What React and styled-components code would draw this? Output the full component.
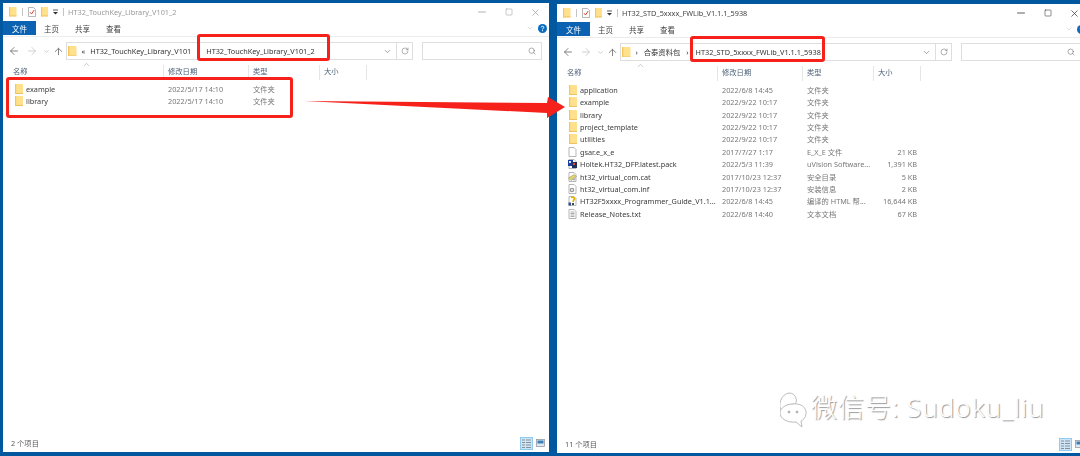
import React from "react";
import styled, { createGlobalStyle } from "styled-components";
import { ArrowLeft, ArrowRight, ArrowUp, ChevronDown, ChevronUp, Minus, RotateCw, Search, Square, X } from "lucide-react";

const LEFT_ROWS = [
  { icon: "folder", name: "example", date: "2022/5/17 14:10", type: "文件夹" },
  { icon: "folder", name: "library", date: "2022/5/17 14:10", type: "文件夹" },
];

const RIGHT_ROWS = [
  { icon: "folder", name: "application", date: "2022/6/8 14:45", type: "文件夹" },
  { icon: "folder", name: "example", date: "2022/9/22 10:17", type: "文件夹" },
  { icon: "folder", name: "library", date: "2022/9/22 10:17", type: "文件夹" },
  { icon: "folder", name: "project_template", date: "2022/9/22 10:17", type: "文件夹" },
  { icon: "folder", name: "utilities", date: "2022/9/22 10:17", type: "文件夹" },
  { icon: "blank", name: "gsar.e_x_e", date: "2017/7/27 1:17", type: "E_X_E 文件", size: "21 KB" },
  { icon: "pack", name: "Holtek.HT32_DFP.latest.pack", date: "2022/5/3 11:39", type: "uVision Software...", size: "1,391 KB" },
  { icon: "cat", name: "ht32_virtual_com.cat", date: "2017/10/23 12:37", type: "安全目录", size: "5 KB" },
  { icon: "inf", name: "ht32_virtual_com.inf", date: "2017/10/23 12:37", type: "安装信息", size: "2 KB" },
  { icon: "chm", name: "HT32F5xxxx_Programmer_Guide_V1.1...", date: "2022/6/8 14:45", type: "编译的 HTML 帮...", size: "16,644 KB" },
  { icon: "txt", name: "Release_Notes.txt", date: "2022/6/8 14:40", type: "文本文档", size: "67 KB" },
];

const GlobalStyle = createGlobalStyle`
  html, body { margin: 0; padding: 0; background: #02589e; }
  body { font-family: "Noto Sans", "Noto Sans CJK SC", sans-serif; }
`;

const Page = styled.div`
  position: relative;
  display: grid;
  grid-template-columns: 546px 531px;
  gap: 8px;
  width: 1080px;
  height: 456px;
  padding: 3px 0 4px 3px;
  box-sizing: border-box;
  overflow: hidden;
  background: #02589e;
`;

const Win = styled.section`
  display: flex;
  flex-direction: column;
  margin-top: ${(p) => p.$drop}px;
  margin-bottom: ${(p) => (p.$drop ? -1 : 0)}px;
  min-height: 0;
  background: #fff;
  font-size: 7.3px;
  color: #3a3a3a;
  filter: blur(0.35px);
`;

const TitleBar = styled.header`
  display: flex;
  align-items: center;
  height: 18px;
  padding: 0 0 0 6px;
`;

const Quick = styled.div`
  display: flex;
  align-items: center;
  gap: 5px;
  margin-right: 3px;
  color: #333;
`;

const Sep = styled.span`
  width: 1px;
  height: 8px;
  background: #c4c4c4;
`;

const Title = styled.span`
  flex: 1;
  margin-left: 1px;
  color: ${(p) => (p.$dim ? "#999" : "#444")};
`;

const WinButtons = styled.div`
  display: flex;
  color: ${(p) => (p.$dim ? "#9a9a9a" : "#2a2a2a")};
`;

const WinButton = styled.span`
  display: flex;
  align-items: center;
  justify-content: center;
  width: 27px;
  height: 18px;
`;

const Ribbon = styled.nav`
  display: flex;
  align-items: center;
  height: 14px;
  padding-bottom: 1px;
  border-bottom: 1px solid #ececec;
`;

const FileTab = styled.span`
  display: flex;
  align-items: center;
  justify-content: center;
  width: 33px;
  height: 14px;
  font-size: 7.5px;
  color: #fff;
  background: #0b62b2;
`;

const Tab = styled.span`
  width: 31px;
  text-align: center;
  font-size: 7.5px;
  color: #444;
`;

const RibbonEnd = styled.div`
  display: flex;
  align-items: center;
  gap: 4px;
  margin-left: auto;
  padding-right: 2px;
  color: #aaa;
`;

const NavBar = styled.div`
  display: flex;
  align-items: center;
  height: 28px;
  padding: 0 7px 0 5px;
  box-sizing: border-box;
`;

const NavButtons = styled.div`
  display: flex;
  align-items: center;
  width: 58px;
  color: #777;
`;

const NavIcon = styled.span`
  display: flex;
  margin-left: ${(p) => p.$ml || 0}px;
  color: ${(p) => p.$color || "#777"};
`;

const AddressBox = styled.div`
  display: flex;
  align-items: center;
  flex: 1;
  height: 18px;
  margin-right: 9px;
  border: 1px solid #dedede;
  box-sizing: border-box;
  padding-left: 1px;
`;

const Crumb = styled.span`
  margin-left: ${(p) => p.$gap}px;
  color: #333;
  white-space: nowrap;
`;

const AddressEnd = styled.div`
  display: flex;
  align-items: center;
  height: 100%;
  margin-left: auto;
  color: #666;
`;

const AddressCell = styled.span`
  display: flex;
  align-items: center;
  justify-content: center;
  width: ${(p) => (p.$line ? 16 : 18)}px;
  height: 100%;
  box-sizing: border-box;
  border-left: ${(p) => (p.$line ? "1px solid #dedede" : "none")};
`;

const SearchBox = styled.div`
  display: flex;
  align-items: center;
  justify-content: flex-end;
  width: 120px;
  height: 18px;
  padding-right: 5px;
  border: 1px solid #dedede;
  box-sizing: border-box;
  color: #666;
`;

const Columns = styled.div`
  display: grid;
  grid-template-columns: 161px 85px 71px 47px;
  align-items: center;
`;

const HeaderRow = styled(Columns)`
  position: relative;
  height: 15px;
  color: #4d6178;
`;

const SortCaret = styled.span`
  position: absolute;
  left: 79px;
  top: -5px;
  display: flex;
  color: #888;
`;

const HeadCell = styled.span`
  height: 100%;
  display: flex;
  align-items: center;
  padding: 0 0 3px ${(p) => (p.$first ? 10 : 4)}px;
  border-right: 1px solid #e6e6e6;
  box-sizing: border-box;
`;

const List = styled.div`
  flex: 1;
  padding-top: 2.5px;
`;

const Row = styled(Columns)`
  height: 12.42px;
  white-space: nowrap;
`;

const NameCell = styled.span`
  display: flex;
  align-items: center;
  gap: 3px;
  padding-left: 11px;
  color: #3c3c3c;
`;

const IconSlot = styled.span`
  display: flex;
  justify-content: center;
  flex: 0 0 9px;
`;

const InfoCell = styled.span`
  padding-left: 4px;
  color: #777;
`;

const SizeCell = styled.span`
  padding-right: 4px;
  text-align: right;
  color: #777;
`;

const StatusBar = styled.footer`
  display: flex;
  align-items: center;
  justify-content: space-between;
  height: 18px;
  padding: 0 4px 0 8px;
  color: #5a5a5a;
`;

const ViewButtons = styled.div`
  display: flex;
  align-items: center;
  gap: 3px;
`;

const ViewActive = styled.span`
  display: flex;
  align-items: center;
  justify-content: center;
  width: 13px;
  height: 13px;
  background: #cde6f7;
  border: 1px solid #8fcbf0;
  box-sizing: border-box;
`;

const Callout = styled.div`
  position: absolute;
  left: ${(p) => p.$x}px;
  top: ${(p) => p.$y}px;
  width: ${(p) => p.$w}px;
  height: ${(p) => p.$h}px;
  border: 3px solid #f5211a;
  border-radius: 3px;
  box-sizing: border-box;
`;

const ArrowLayer = styled.svg`
  position: absolute;
  left: 0;
  top: 0;
  pointer-events: none;
`;

const Watermark = styled.div`
  position: absolute;
  left: 780px;
  top: 387px;
  display: flex;
  align-items: center;
  gap: 4px;
  font-weight: 300;
  font-size: 26px;
  letter-spacing: 1px;
  color: #fff;
  text-shadow: 1px 1px 1px rgba(0, 0, 0, 0.42);
  white-space: nowrap;
`;

const WatermarkMark = styled.span`
  display: flex;
  margin-top: 4px;
`;

const WatermarkText = styled.span`
  margin-bottom: 4px;
`;

const Folder = ({ size = 8 }) => (
  <svg width={size} height={size * 1.25} viewBox="0 0 8 10">
    <rect x="0" y="0" width="8" height="10" rx="0.6" fill="#ffe08c" />
    <rect x="0" y="0" width="1.2" height="10" fill="#f2c661" />
    <rect x="0" y="9" width="8" height="1" fill="#eec262" />
  </svg>
);

const FileIcon = ({ kind }) => {
  if (kind === "folder") return <Folder />;
  return (
    <svg width="9" height="10" viewBox="0 0 9 10">
      <path d="M1 0.5H6L8 2.5V9.5H1Z" fill="#fff" stroke="#9a9a9a" strokeWidth="0.7" />
      {kind === "txt" && (
        <path d="M2.5 3H6.5M2.5 4.5H6.5M2.5 6H6.5M2.5 7.5H6.5" stroke="#8a8a8a" strokeWidth="0.7" />
      )}
      {kind === "pack" && (
        <>
          <rect x="0" y="1" width="5" height="6" fill="#1f3f9e" />
          <rect x="4" y="3" width="5" height="6" fill="#22305e" />
          <rect x="5" y="4" width="2" height="2" fill="#e04a3a" />
          <rect x="1" y="2" width="2" height="2" fill="#d8e4ff" />
        </>
      )}
      {kind === "cat" && (
        <>
          <path d="M0.5 6L6 2.5L8.5 4.5L3 8.5Z" fill="#e2d56a" stroke="#8d8d6a" strokeWidth="0.5" />
          <circle cx="6" cy="7" r="1.6" fill="#b8b8b8" />
        </>
      )}
      {kind === "inf" && (
        <>
          <circle cx="4" cy="6" r="2.3" fill="#9c9c9c" />
          <circle cx="4" cy="6" r="0.9" fill="#fff" />
        </>
      )}
      {kind === "chm" && (
        <>
          <path d="M3 1.6C6.5 0.5 7.5 3 5.5 4.2L5 6" fill="none" stroke="#e4b400" strokeWidth="1.6" />
          <rect x="4" y="7" width="2" height="2" fill="#444" />
          <rect x="0.5" y="6.5" width="2.5" height="3" fill="#2e4f9c" />
        </>
      )}
    </svg>
  );
};

const ChecklistIcon = () => (
  <svg width="8" height="10" viewBox="0 0 8 10">
    <path d="M0.5 0.5H5.500L7.500 2.500V9.500H0.500Z" fill="#fff" stroke="#9a9a9a" strokeWidth="0.7" />
    <path d="M2 5.200L3.500 7L6.200 3" fill="none" stroke="#d9452c" strokeWidth="1" />
  </svg>
);

const DropLine = () => (
  <svg width="5" height="6" viewBox="0 0 5 6">
    <path d="M0 1H5" stroke="#333" strokeWidth="0.8" />
    <path d="M0 3H5L2.500 5.600Z" fill="#333" />
  </svg>
);

const HelpIcon = () => (
  <svg width="9" height="9" viewBox="0 0 9 9">
    <circle cx="4.500" cy="4.500" r="4.500" fill="#0a6cc0" />
    <path d="M3.200 3.400C3.300 1.900 5.800 1.900 5.800 3.400 5.800 4.400 4.500 4.400 4.500 5.500" fill="none" stroke="#fff" strokeWidth="1" />
    <rect x="4" y="6.200" width="1" height="1" fill="#fff" />
  </svg>
);

const GridViewIcon = () => (
  <svg width="9" height="9" viewBox="0 0 9 9">
    <path d="M0 1H3M0 3.500H3M0 6H3M0 8.500H3M4 1H9M4 3.500H9M4 6H9M4 8.500H9" stroke="#8a8f96" strokeWidth="1" />
  </svg>
);

const ThumbViewIcon = () => (
  <svg width="9" height="8" viewBox="0 0 9 8">
    <rect x="0.500" y="0.500" width="8" height="7" fill="#dce8f2" stroke="#8a8f96" strokeWidth="0.7" />
    <rect x="1.500" y="1.500" width="6" height="3" fill="#3f7fb8" />
  </svg>
);

const WeChat = () => (
  <svg width="27" height="36" viewBox="0 0 27 36" fill="#fff" stroke="#b4b4b4" strokeWidth="0.9">
    <path d="M9 1C16 1 18 9 15 12 9 12 3 14 2 19 -3 14 1 2 9 1Z" />
    <path d="M13 12C20 11 27 15 26 22 25.500 26 23 28 21 29L22 35 16 30C8 31 0 27 0 21 0 16 6 12 13 12Z" />
    <circle cx="9" cy="20" r="1" fill="#999" />
    <circle cx="17" cy="20" r="1" fill="#999" />
  </svg>
);

const Window = ({ title, rows, count, crumbs, drop = 0, dim }) => (
  <Win $drop={drop}>
    <TitleBar>
      <Quick>
        <Folder size={7.5} />
        <Sep />
        <ChecklistIcon />
        <Folder size={7.5} />
        <DropLine />
        <Sep />
      </Quick>
      <Title $dim={dim}>{title}</Title>
      <WinButtons $dim={dim}>
        <WinButton><Minus size={12} strokeWidth={1.5} /></WinButton>
        <WinButton><Square size={8} strokeWidth={1.6} /></WinButton>
        <WinButton><X size={11} strokeWidth={1.5} /></WinButton>
      </WinButtons>
    </TitleBar>
    <Ribbon>
      <FileTab>文件</FileTab>
      <Tab>主页</Tab>
      <Tab>共享</Tab>
      <Tab>查看</Tab>
      <RibbonEnd>
        <ChevronDown size={8} strokeWidth={1.2} />
        <HelpIcon />
      </RibbonEnd>
    </Ribbon>
    <NavBar>
      <NavButtons>
        <NavIcon><ArrowLeft size={12} strokeWidth={1.8} /></NavIcon>
        <NavIcon $ml={6} $color="#ccc"><ArrowRight size={12} strokeWidth={1.8} /></NavIcon>
        <NavIcon $ml={4.5} $color="#aaa"><ChevronDown size={7} strokeWidth={2} /></NavIcon>
        <NavIcon $ml={3}><ArrowUp size={11} strokeWidth={2} /></NavIcon>
      </NavButtons>
      <AddressBox>
        <Folder size={8.5} />
        {crumbs.map((c) => (
          <Crumb key={c.text} $gap={c.gap}>{c.text}</Crumb>
        ))}
        <AddressEnd>
          <AddressCell><ChevronDown size={9} strokeWidth={1.6} /></AddressCell>
          <AddressCell $line><RotateCw size={8} strokeWidth={1.5} /></AddressCell>
        </AddressEnd>
      </AddressBox>
      <SearchBox><Search size={8} strokeWidth={1.6} /></SearchBox>
    </NavBar>
    <HeaderRow>
      <SortCaret><ChevronUp size={9} strokeWidth={1.2} /></SortCaret>
      <HeadCell $first>名称</HeadCell>
      <HeadCell>修改日期</HeadCell>
      <HeadCell>类型</HeadCell>
      <HeadCell>大小</HeadCell>
    </HeaderRow>
    <List>
      {rows.map((r) => (
        <Row key={r.name}>
          <NameCell><IconSlot><FileIcon kind={r.icon} /></IconSlot>{r.name}</NameCell>
          <InfoCell>{r.date}</InfoCell>
          <InfoCell>{r.type}</InfoCell>
          <SizeCell>{r.size}</SizeCell>
        </Row>
      ))}
    </List>
    <StatusBar>
      <span>{count}</span>
      <ViewButtons>
        <ViewActive><GridViewIcon /></ViewActive>
        <ThumbViewIcon />
      </ViewButtons>
    </StatusBar>
  </Win>
);

const App = () => (
  <Page>
    <GlobalStyle />
    <Window
      title="HT32_TouchKey_Library_V101_2"
      rows={LEFT_ROWS}
      count="2 个项目"
      dim
      crumbs={[
        { text: "«", gap: 5 },
        { text: "HT32_TouchKey_Library_V101", gap: 5 },
        { text: "HT32_TouchKey_Library_V101_2", gap: 15 },
      ]}
    />
    <Window
      title="HT32_STD_5xxxx_FWLib_V1.1.1_5938"
      rows={RIGHT_ROWS}
      count="11 个项目"
      drop={1}
      crumbs={[
        { text: "›", gap: 5 },
        { text: "合泰资料包", gap: 6 },
        { text: "›", gap: 6 },
        { text: "HT32_STD_5xxxx_FWLib_V1.1.1_5938", gap: 7 },
      ]}
    />
    <Callout $x={197} $y={34} $w={133} $h={27} />
    <Callout $x={6} $y={77} $w={287} $h={41} />
    <Callout $x={690} $y={36} $w={135} $h={26} />
    <ArrowLayer width="1080" height="456" viewBox="0 0 1080 456">
      <polygon points="304,101 547,103 548,97 565,107 547,118 547,113" fill="#f5211a" />
    </ArrowLayer>
    <Watermark>
      <WatermarkMark><WeChat /></WatermarkMark>
      <WatermarkText>微信号: Sudoku_liu</WatermarkText>
    </Watermark>
  </Page>
);

export default App;
